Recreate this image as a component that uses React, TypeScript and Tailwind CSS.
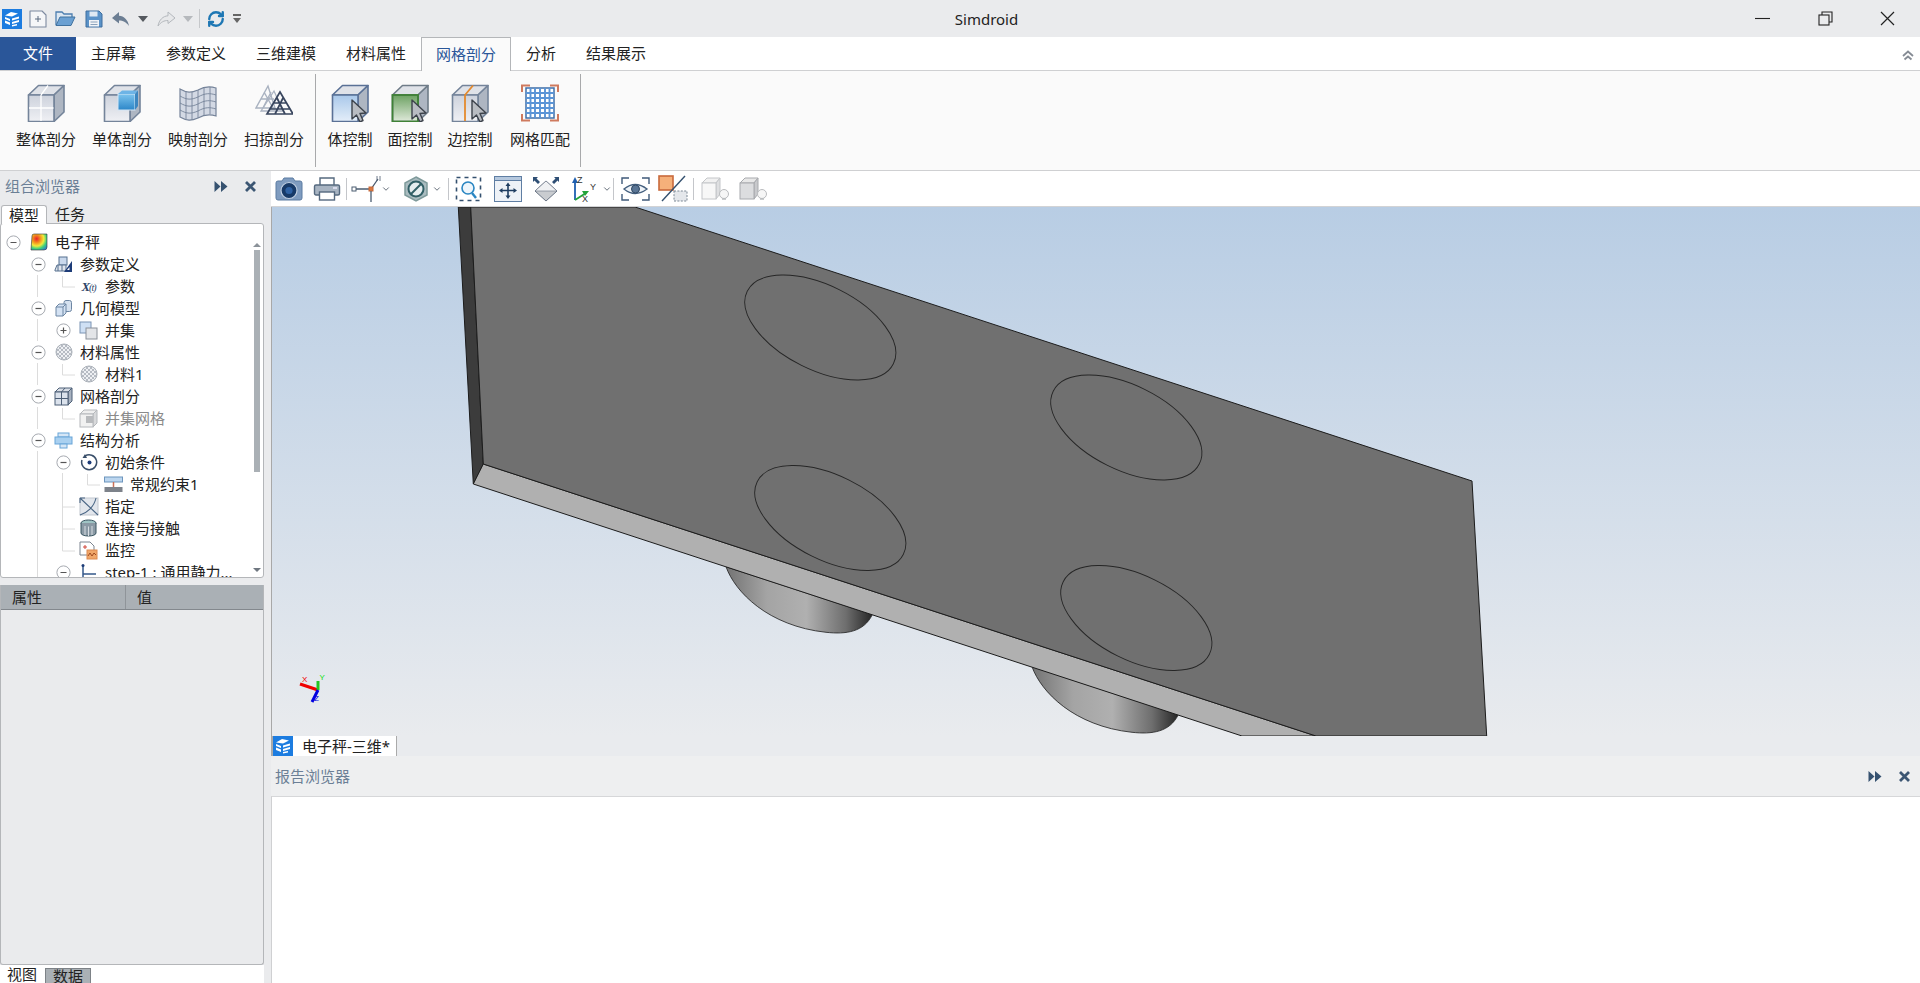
import React from "react";
import { RefreshCw, ChevronDown } from "lucide-react";

const S = ({ w, h, vb, children, className }: { w: number; h: number; vb?: string; children: React.ReactNode; className?: string }) => (
  <svg width={w} height={h} viewBox={vb ?? `0 0 ${w} ${h}`} className={className} fill="none">{children}</svg>
);

const Logo = () => (
  <S w={20} h={20}>
    <rect width="20" height="20" fill="#1c7ce0" />
    <path d="M3 6.5 L9 3 L16 4.5 L10 7.5Z M3 8 L8 10 V12 L3 10Z M3 11.5 L8 13.5 V16 L3 14Z" fill="#fff" />
    <path d="M10 9.5 L17 7.5 V9.5 L10 11.5Z M10 13 L17 11 V13 L10 15Z M10 16 L15 15 V16.5 L10 17.5Z" fill="#fff" />
  </S>
);

const Defs = () => (
  <svg width="0" height="0" className="absolute">
    <defs>
      <linearGradient id="gFront" x1="0" y1="0" x2="0" y2="1"><stop offset="0" stopColor="#cdd2dc" /><stop offset="1" stopColor="#eff0f4" /></linearGradient>
      <linearGradient id="gBlue" x1="0" y1="0" x2="0" y2="1"><stop offset="0" stopColor="#a9c8ea" /><stop offset="1" stopColor="#e4eef9" /></linearGradient>
      <linearGradient id="gGreen" x1="0" y1="0" x2="0" y2="1"><stop offset="0" stopColor="#6da263" /><stop offset="1" stopColor="#dfe9da" /></linearGradient>
      <linearGradient id="gCyan" x1="0" y1="0" x2="0" y2="1"><stop offset="0" stopColor="#7cc4ee" /><stop offset="1" stopColor="#2c86c8" /></linearGradient>
      <radialGradient id="gHeat" cx=".35" cy=".3" r=".9"><stop offset="0" stopColor="#e8202a" /><stop offset=".3" stopColor="#f59b1f" /><stop offset=".5" stopColor="#f2ea3c" /><stop offset=".7" stopColor="#3ed17c" /><stop offset="1" stopColor="#2668e0" /></radialGradient>
      <linearGradient id="gBump" x1="0" y1="0" x2="1" y2="0"><stop offset="0" stopColor="#737373" /><stop offset=".28" stopColor="#a4a4a4" /><stop offset=".55" stopColor="#b0b0b0" /><stop offset=".82" stopColor="#6e6e6e" /><stop offset="1" stopColor="#262626" /></linearGradient>
      <pattern id="pDots" width="4" height="4" patternUnits="userSpaceOnUse"><rect width="4" height="4" fill="#eef0f3" /><rect width="2" height="2" fill="#b6bbc3" /><rect x="2" y="2" width="2" height="2" fill="#b6bbc3" /></pattern>
    </defs>
  </svg>
);

const Cube = ({ front = "url(#gFront)", stroke = "#74849a", split = true, children }: { front?: string; stroke?: string; split?: boolean; children?: React.ReactNode }) => (
  <g strokeLinejoin="round">
    <path d="M1.5 11 L11.5 1.5 H37 L27 11Z" fill="#dfe2e8" stroke={stroke} strokeWidth="1.6" />
    <path d="M27 11 L37 1.5 V28 L27 37.5Z" fill="#aeb6c2" stroke={stroke} strokeWidth="1.6" />
    <rect x="1.5" y="11" width="25.5" height="26.5" fill={front} stroke={stroke} strokeWidth="1.6" />
    {split && <path d="M14 11 V37 M2 24 H26.5 M21 1.5 L14 11" stroke="#fff" strokeWidth="1.3" />}
    {children}
  </g>
);

const Cursor = () => <path d="M21 16 V35 L25.5 31 L29 38 L32 36.5 L29 29.5 L35 29Z" fill="#b8bcc2" stroke="#3d434c" strokeWidth="1.4" strokeLinejoin="round" />;

const RibbonIcons: Record<string, React.ReactNode> = {
  whole: <S w={38} h={38}><Cube /></S>,
  single: <S w={38} h={38}><Cube split={false} /><rect x="15" y="10" width="17" height="16" fill="url(#gCyan)" stroke="#d4e6f5" strokeWidth="1" /><path d="M15 10 L19 6.5 H35 L32 10Z" fill="#6db4e6" /><path d="M32 10 L35 6.5 V22 L32 26Z" fill="#3c86c0" /></S>,
  map: (
    <S w={38} h={38}>
      <path d="M1 5 C8 9 12 9 19 6 C26 2 31 2 37 4 V32 C31 30 26 30 19 34 C12 37 8 37 1 33Z" fill="#d3d9e4" stroke="#76849a" strokeWidth="1.2" />
      <path d="M1 12 C8 16 12 16 19 13 C26 9 31 9 37 11 M1 19 C8 23 12 23 19 20 C26 16 31 16 37 18 M1 26 C8 30 12 30 19 27 C26 23 31 23 37 25" stroke="#76849a" strokeWidth=".9" />
      <path d="M7 7 V35 M13 8 V36 M19 6 V34 M25 3.5 V31.5 M31 3 V30" stroke="#76849a" strokeWidth=".9" />
    </S>
  ),
  sweep: (
    <S w={38} h={38}>
      <path d="M13 2 L1 24 H20Z M6 15 H19 M9 8 L18 24 M16 8 L8 24" stroke="#a9b2c0" strokeWidth="1.4" />
      <path d="M19 7 L6 27 H28Z" stroke="#aab3c1" strokeWidth="1.3" />
      <path d="M25 8 L12 30 H38Z M18.5 19 H31.5 M22 14 L30 30 M28 14 L20 30 M15 25 H35" stroke="#39465e" strokeWidth="1.7" />
    </S>
  ),
  body: <S w={38} h={38}><Cube front="url(#gBlue)" split={false} stroke="#5a7196" /><Cursor /></S>,
  face: <S w={38} h={38}><Cube front="url(#gGreen)" split={false} stroke="#6f7c88" /><rect x="1.5" y="11" width="25.5" height="26.5" stroke="#3f8236" strokeWidth="1.8" /><Cursor /></S>,
  edge: <S w={38} h={38}><Cube split={false} /><path d="M22 1.5 L14 11 V37" stroke="#e48a2e" strokeWidth="1.8" /><Cursor /></S>,
  match: (
    <S w={38} h={38}>
      <path d="M1 8 V1.5 H9 M29 1.5 H37 V8 M37 30 V36.5 H29 M9 36.5 H1 V30" stroke="#cf7a5e" strokeWidth="2" />
      <rect x="5" y="4" width="28" height="30" fill="#fff" stroke="#3f6fa8" strokeWidth="1.5" />
      <path d="M9.5 4 V34 M14 4 V34 M19 4 V34 M24 4 V34 M28.5 4 V34 M5 9 H33 M5 14 H33 M5 19 H33 M5 24 H33 M5 29 H33" stroke="#5a94d6" strokeWidth="1.9" />
    </S>
  ),
};

const RibbonBtn = ({ icon, label, w }: { icon: string; label: string; w: string }) => (
  <div className={`${w} flex flex-col items-center`}>
    <div className="h-[38px] mt-[13px]">{RibbonIcons[icon]}</div>
    <div className="mt-[7px] text-[15px] leading-[20px] text-[#222]">{label}</div>
  </div>
);

const Sep = () => <div className="w-px h-[22px] bg-[#c4c6ca]" />;

const Chev = () => <ChevronDown size={10} strokeWidth={2} className="text-[#4a5563]" />;

const FF = () => (
  <S w={14} h={13}><path d="M0.5 1 L6.5 6.5 L0.5 12Z M7 1 L13.5 6.5 L7 12Z" fill="#365270" /></S>
);
const XX = () => (
  <S w={13} h={13}><path d="M2 2 L11 11 M11 2 L2 11" stroke="#3c5673" strokeWidth="2.8" /></S>
);

const Exp = ({ plus }: { plus?: boolean }) => (
  <S w={15} h={15}>
    <circle cx="7.5" cy="7.5" r="6.6" fill="#fff" stroke="#a6aab0" />
    <path d={plus ? "M4.5 7.5 H10.5 M7.5 4.5 V10.5" : "M4.5 7.5 H10.5"} stroke="#555" strokeWidth="1.2" />
  </S>
);

const TreeIcons: Record<string, React.ReactNode> = {
  root: <S w={20} h={20}><path d="M3 4 Q3 2 5 2 H18 V15 Q18 18 15 18 H2Z" fill="url(#gHeat)" stroke="#333" strokeWidth=".6" /></S>,
  param: <S w={19} h={18}><rect x="5" y="2" width="8" height="8" fill="#c9d8ec" stroke="#56708f" /><path d="M1 15 L3 10 H12 V16 H1Z" fill="#dfe4ec" stroke="#56708f" /><path d="M4 10 V16 M8 10 V16" stroke="#56708f" /><path d="M18 6 V17 H10Z" fill="#1d3c78" /><path d="M15.5 12 V15 H13Z" fill="#fff" /></S>,
  xt: <span className="font-['Liberation_Serif',serif] italic font-bold text-[13px] text-[#2d4468] tracking-[-1px] leading-none">X<span className="text-[10px] font-normal">(t)</span></span>,
  geom: <S w={18} h={18}><rect x="9" y="1.5" width="7.5" height="11" rx="2" fill="#d5e1ef" stroke="#6d86a3" /><path d="M1 8 L4 5 H11 V14 L8 17 H1Z" fill="#d4e2f3" stroke="#6d86a3" /><path d="M1 8 H8 V17 M8 8 L11 5" stroke="#6d86a3" /></S>,
  union: <S w={19} h={19}><rect x="1" y="1" width="11" height="11" fill="#cfe0f4" stroke="#7b94b4" /><rect x="7" y="7" width="11" height="11" fill="#e3e5e8" stroke="#8a9099" /></S>,
  mat: <S w={18} h={18}><circle cx="9" cy="9" r="8" fill="url(#pDots)" stroke="#aab0b8" /></S>,
  mesh: <S w={19} h={19}><path d="M1 5 L5 1 H18 L14 5Z" fill="#d9dee6" stroke="#4d5f76" /><path d="M14 5 L18 1 V14 L14 18Z" fill="#a8b2c0" stroke="#4d5f76" /><rect x="1" y="5" width="13" height="13" fill="#dbe2ec" stroke="#4d5f76" /><path d="M7.5 5 V18 M1 11.5 H14 M11 1 L7.5 5" stroke="#4d5f76" /></S>,
  gmesh: <S w={19} h={19}><path d="M1 5 L5 1 H18 L14 5Z" fill="#efefef" stroke="#b5b8bc" /><path d="M14 5 L18 1 V14 L14 18Z" fill="#d8d9db" stroke="#b5b8bc" /><rect x="1" y="5" width="13" height="13" fill="#f1f1f1" stroke="#b5b8bc" /><rect x="7" y="7" width="7" height="7" fill="#b8babd" /></S>,
  struct: <S w={19} h={17}><rect x="4" y="1" width="11" height="4" fill="#d5e6f6" stroke="#69a5d8" /><rect x="1" y="5" width="17" height="7" fill="#a9d0f0" stroke="#69a5d8" /><rect x="6" y="12" width="7" height="4" fill="#d5e6f6" stroke="#69a5d8" /></S>,
  init: <S w={18} h={18}><path d="M5 3 A7.5 7.5 0 1 1 2 7" stroke="#3a4f6a" strokeWidth="1.5" /><path d="M5 1 L7 5 L2.5 5Z" fill="#3a4f6a" /><circle cx="9.5" cy="9.5" r="2" fill="#1d3c78" /></S>,
  cons: <S w={19} h={17}><rect x="0.5" y="1" width="18" height="5" fill="#bcd6ef" stroke="#6d95bd" /><path d="M9.5 6 V11" stroke="#c8705a" strokeWidth="1.5" /><rect x="0.5" y="11" width="18" height="5" fill="#7d828a" /></S>,
  assign: <S w={20} h={19}><rect x="1" y="1" width="18" height="17" fill="#e2e6ec" stroke="#c2c7cf" /><path d="M1 1 H6 M1 1 V6 M1 18 C8 16 15 10 17 1 M1 1 L19 18" stroke="#496584" strokeWidth="1.1" /></S>,
  conn: <S w={17} h={18}><ellipse cx="8.5" cy="4" rx="7.5" ry="3" fill="#9fc4c4" stroke="#3a5662" /><path d="M1 4 V14 C1 18 16 18 16 14 V4" fill="#8b9aa5" stroke="#3a5662" /><path d="M5 7 V16 M8.5 7.5 V17 M12 7 V16" stroke="#d8dee3" /></S>,
  mon: <S w={19} h={19}><path d="M1 1 H11 L15 5 V14 H1Z" fill="#fff" stroke="#7d8590" /><path d="M4 6 H8 M6 4 V8" stroke="#d1463a" /><rect x="8" y="9" width="10" height="9" fill="#f0a76a" stroke="#dc8a50" /><path d="M9 15 L11 12 L13 15 L15 12 L17 14" stroke="#a04b20" /></S>,
  step: <S w={18} h={19}><path d="M3 2 V18 M3 11 H16" stroke="#35588a" strokeWidth="1.5" /><circle cx="3" cy="2.5" r="1.5" fill="#1d3c78" /></S>,
};

type Row = { d: number; label: string; icon: string; exp?: "-" | "+"; muted?: boolean };
const rows: Row[] = [
  { d: 0, label: "电子秤", icon: "root", exp: "-" },
  { d: 1, label: "参数定义", icon: "param", exp: "-" },
  { d: 2, label: "参数", icon: "xt" },
  { d: 1, label: "几何模型", icon: "geom", exp: "-" },
  { d: 2, label: "并集", icon: "union", exp: "+" },
  { d: 1, label: "材料属性", icon: "mat", exp: "-" },
  { d: 2, label: "材料1", icon: "mat" },
  { d: 1, label: "网格剖分", icon: "mesh", exp: "-" },
  { d: 2, label: "并集网格", icon: "gmesh", muted: true },
  { d: 1, label: "结构分析", icon: "struct", exp: "-" },
  { d: 2, label: "初始条件", icon: "init", exp: "-" },
  { d: 3, label: "常规约束1", icon: "cons" },
  { d: 2, label: "指定", icon: "assign" },
  { d: 2, label: "连接与接触", icon: "conn" },
  { d: 2, label: "监控", icon: "mon" },
  { d: 2, label: "step-1 : 通用静力...", icon: "step", exp: "-" },
];
const indent = ["pl-0", "pl-[25px]", "pl-[50px]", "pl-[75px]"];

const TreeGuides = () => (
  <svg width="262" height="353" viewBox="1 224 262 353" className="absolute left-0 top-0 pointer-events-none" fill="none">
    <path
      d="M37.5 275 V297 M37.5 319 V341 M37.5 363 V385 M37.5 407 V429 M37.5 451 V578
         M62.5 276 V287 H75 M62.5 364 V375 H75 M62.5 408 V419 H75
         M62.5 473 V551 M62.5 507 H75 M62.5 529 H75 M62.5 551 H75
         M87.5 474 V485 H100"
      stroke="#dcdcdc"
    />
  </svg>
);

const Tree = () => (
  <div className="relative h-[355px] ml-0 mr-[7px] bg-white border border-[#b4b6b9] rounded-[3px] overflow-hidden flex">
    <TreeGuides />
    <div className="relative flex-1 pt-[7px] overflow-hidden">
      {rows.map((r) => (
        <div key={r.label} className={`${indent[r.d]} h-[22px] flex items-center whitespace-nowrap`}>
          <div className="w-[25px] flex justify-center">{r.exp && <Exp plus={r.exp === "+"} />}</div>
          <div className="w-[25px] flex justify-center items-center">{TreeIcons[r.icon]}</div>
          <div className={`ml-[4px] text-[15px] leading-[22px] ${r.muted ? "text-[#8a8a8a]" : "text-[#222]"}`}>{r.label}</div>
        </div>
      ))}
    </div>
    <div className="w-[10px] mr-[1px] flex flex-col items-center shrink-0">
      <div className="mt-[19px] w-0 h-0 border-x-[4px] border-x-transparent border-b-[4px] border-b-[#8b9299]" />
      <div className="mt-[3px] w-[6px] h-[222px] bg-[#aab0b5]" />
      <div className="mt-auto mb-[5px] w-0 h-0 border-x-[4px] border-x-transparent border-t-[4px] border-t-[#6f7780]" />
    </div>
  </div>
);

const Viewport = () => {
  const ellipses = [
    [820.3, 327.5],
    [1126.3, 427.5],
    [830.3, 518],
    [1136.3, 618],
  ];
  return (
    <div className="relative h-[529px] border-l border-[#a8a8a8] bg-linear-to-b from-[#b8cde4] to-[#e9ebee] overflow-hidden">
      <svg width="1648" height="529" viewBox="272 207 1648 529" className="absolute inset-0">
        {[0, 306].map((dx, i) => (
          <path
            key={i}
            transform={`translate(${dx} ${i ? 100 : 0})`}
            d="M726 566.7 C735 592 768 626 826 632.3 C846 634.5 864 632 872.3 614.6Z"
            fill="url(#gBump)"
            stroke="#1d1d1d"
            strokeWidth=".8"
          />
        ))}
        <path d="M458.3 207 H470.7 L483.3 464 L473.3 484Z" fill="#3c3c3c" stroke="#1c1c1c" />
        <path d="M483.3 464 L473.3 484 L1242 736 H1316Z" fill="#b0b0b0" stroke="#1c1c1c" />
        <path d="M470.7 207 H635 L1472 481 L1486.7 736 H1316 L483.3 464Z" fill="#707070" stroke="#1c1c1c" />
        {ellipses.map(([cx, cy], i) => (
          <ellipse key={i} cx={cx} cy={cy} rx="81.6" ry="42.3" transform={`rotate(26.4 ${cx} ${cy})`} fill="none" stroke="#262626" strokeWidth=".9" />
        ))}
        <path d="M318 690 L300 684" stroke="#f00000" strokeWidth="3" />
        <path d="M318 690 V681" stroke="#22c522" strokeWidth="3" />
        <path d="M318 690 L312 702" stroke="#0000e0" strokeWidth="3" />
        <text x="302" y="682" fontSize="8" fill="#f00000" fontFamily="Liberation Sans, sans-serif">X</text>
        <text x="319.5" y="680" fontSize="8" fill="#10e010" fontFamily="Liberation Sans, sans-serif">Y</text>
        <text x="314" y="701" fontSize="8" fill="#0000e0" fontFamily="Liberation Sans, sans-serif">Z</text>
      </svg>
    </div>
  );
};

const ToolIcons = () => (
  <div className="h-[36px] bg-white flex items-center border-b border-[#d2d3d5]">
    <div className="ml-[3px] w-[30px]">
      <S w={30} h={26}><path d="M2 7 Q2 5 4 5 H8 L10 2 H19 L21 5 H26 Q28 5 28 7 V22 Q28 24 26 24 H4 Q2 24 2 22Z" fill="#7f9cc0" stroke="#5c7ca2" /><circle cx="15" cy="14.5" r="8" fill="#173a68" stroke="#c2d0e2" strokeWidth="1.2" /><circle cx="15" cy="14.5" r="3.6" fill="#2f62a4" /></S>
    </div>
    <div className="ml-[9px] w-[28px]">
      <S w={28} h={26}><path d="M7 10 V2 H21 V10" fill="#fff" stroke="#55697f" strokeWidth="1.4" /><rect x="1.5" y="9" width="25" height="10" rx="1.5" fill="#a8b4c2" stroke="#55697f" strokeWidth="1.4" /><rect x="6.5" y="16" width="15" height="8" fill="#fff" stroke="#55697f" strokeWidth="1.4" /><path d="M20 12 H24" stroke="#eef" strokeWidth="1.4" /></S>
    </div>
    <div className="ml-[5px] mr-[4px]"><Sep /></div>
    <div className="w-[30px]">
      <S w={30} h={26}><path d="M3 13 H20 L27 3" stroke="#4b5c70" strokeWidth="1.3" /><rect x="1" y="11" width="4" height="4" fill="#fff" stroke="#4b5c70" /><rect x="18" y="11" width="4" height="4" fill="#d97a42" stroke="#c5683a" /><path d="M20 15 V26" stroke="#4b5c70" strokeWidth="1.3" /><path d="M26 0 V5 M29 0 V5" stroke="#4b5c70" strokeWidth=".8" /></S>
    </div>
    <Chev />
    <div className="ml-[12px] w-[26px]">
      <S w={26} h={26}><path d="M13 1 L24 7 V19 L13 25 L2 19 V7Z" fill="#aabcc0" stroke="#7f9a9b" strokeWidth="1.5" /><circle cx="13" cy="13" r="7.5" fill="#e6eef0" stroke="#315f66" strokeWidth="2" /><path d="M8 18 L18 8" stroke="#315f66" strokeWidth="2" /></S>
    </div>
    <div className="ml-[3px]"><Chev /></div>
    <div className="ml-[6px] mr-[6px]"><Sep /></div>
    <div className="w-[27px]">
      <S w={27} h={26}><rect x="1.5" y="1.5" width="24" height="23" stroke="#34506f" strokeWidth="1.6" strokeDasharray="4 4" /><circle cx="13" cy="12" r="6" fill="#eef6fc" stroke="#2a86c2" strokeWidth="1.6" /><path d="M17 17 L21 22" stroke="#2a86c2" strokeWidth="2.4" /></S>
    </div>
    <div className="ml-[12px] w-[28px]">
      <S w={28} h={26}><rect x="0.5" y="0.5" width="27" height="25" fill="#eef2f7" stroke="#5f7ea3" /><rect x="0.5" y="0.5" width="27" height="4" fill="#b5c8de" stroke="#5f7ea3" /><path d="M14 8 V21 M7 14.5 H21" stroke="#1f3d60" strokeWidth="1.6" /><path d="M14 6.5 L11.5 10 H16.5Z M14 23 L11.5 19.5 H16.5Z M5 14.5 L8.5 12 V17Z M23 14.5 L19.5 12 V17Z" fill="#1f3d60" /></S>
    </div>
    <div className="ml-[10px] w-[28px]">
      <S w={28} h={26}><path d="M14 5 L25 15 L14 25 L3 15Z" fill="#c9ccd0" stroke="#697484" /><path d="M14 5 L3 15 H25Z" fill="#f0f1f3" stroke="#697484" strokeWidth=".6" /><path d="M1 1 H6 L4.5 2.5 L8 6 L6 8 L2.5 4.5 L1 6Z M27 1 H22 L23.5 2.5 L20 6 L22 8 L25.5 4.5 L27 6Z" fill="#2f4f75" /></S>
    </div>
    <div className="ml-[11px] w-[31px]">
      <svg width="31" height="27" viewBox="0 0 31 27" fill="none">
        <path d="M4 25 V7" stroke="#1f5fb0" strokeWidth="1.8" /><path d="M4 2 L1 8 H7Z" fill="#1f5fb0" />
        <path d="M4 25 L15 18" stroke="#23a33a" strokeWidth="1.8" /><path d="M18 16 L11 16 L14 21Z" fill="#23a33a" />
        <text x="6" y="8" fontSize="9" fill="#333" fontFamily="Liberation Sans, sans-serif">Z</text>
        <text x="19" y="15" fontSize="9" fill="#333" fontFamily="Liberation Sans, sans-serif">Y</text>
        <text x="11" y="27" fontSize="9" fill="#333" fontFamily="Liberation Sans, sans-serif">X</text>
      </svg>
    </div>
    <Chev />
    <div className="ml-[1px] mr-[7px]"><Sep /></div>
    <div className="w-[29px]">
      <S w={29} h={26}><path d="M1 8 V2 H8 M21 2 H28 V8 M1 18 V24 H8 M21 24 H28 V18" stroke="#3f5a7a" strokeWidth="1.4" /><path d="M3 13 Q14 4 26 13 Q14 22 3 13Z" fill="#eef3f8" stroke="#45607f" strokeWidth="1.4" /><circle cx="14.5" cy="13" r="4" fill="#5a7595" stroke="#2e4763" /></S>
    </div>
    <div className="ml-[8px] w-[30px]">
      <S w={30} h={27}><rect x="1" y="1" width="14" height="14" fill="#f5b07a" stroke="#c96a3c" strokeWidth="1.6" /><path d="M4 26 L27 1" stroke="#33506f" strokeWidth="1.4" /><rect x="16" y="16" width="13" height="10" fill="#e4e7eb" stroke="#7b8794" strokeDasharray="2 1.4" /></S>
    </div>
    <div className="ml-[5px] mr-[7px]"><Sep /></div>
    <div className="w-[30px]">
      <S w={30} h={26}><path d="M1 7 L6 2 H19 L15 7Z" fill="#f1f1f1" stroke="#c4c6c9" /><path d="M15 7 L19 2 V18 L15 23Z" fill="#dedfe1" stroke="#c4c6c9" /><rect x="1" y="7" width="14" height="16" fill="#f7f7f7" stroke="#c4c6c9" /><circle cx="23" cy="18" r="4.5" fill="#f6f6f6" stroke="#b9bbbe" /><path d="M21 23 H25" stroke="#b9bbbe" strokeWidth="1.5" /></S>
    </div>
    <div className="ml-[8px] w-[30px]">
      <S w={30} h={26}><path d="M1 7 L6 2 H19 L15 7Z" fill="#e8e8e8" stroke="#a8aaae" /><path d="M15 7 L19 2 V18 L15 23Z" fill="#c8c9cc" stroke="#a8aaae" /><rect x="1" y="7" width="14" height="16" fill="#dcdddf" stroke="#a8aaae" /><circle cx="23" cy="18" r="4.5" fill="#f6f6f6" stroke="#b9bbbe" /><path d="M21 23 H25" stroke="#b9bbbe" strokeWidth="1.5" /></S>
    </div>
  </div>
);

export default function App() {
  const tabs = ["主屏幕", "参数定义", "三维建模", "材料属性"];
  return (
    <div className="w-[1920px] h-[983px] overflow-hidden flex flex-col bg-white text-[#222] font-['Noto_Sans','Noto_Sans_CJK_SC',sans-serif]">
      <Defs />
      {/* title bar */}
      <div className="h-[37px] bg-[#eaebed] flex items-center shrink-0">
        <div className="w-[245px] flex items-center pl-[2px]">
          <Logo />
          <div className="ml-[7px]">
            <S w={18} h={18}><path d="M1 1 H13 L17 5 V17 H1Z" fill="#f5f6f8" stroke="#7d8aa0" strokeWidth="1.1" strokeLinejoin="round" /><path d="M6 9 H12 M9 6 V12" stroke="#5a6a80" /></S>
          </div>
          <div className="ml-[8px]">
            <S w={21} h={17}><path d="M1 15 V2 H7 L9 4 H17 V7" stroke="#4d7fb0" strokeWidth="1.3" fill="#dce7f2" /><path d="M1 15.5 L5 7 H20 L16 15.5Z" fill="#6ba0d2" stroke="#41729f" /></S>
          </div>
          <div className="ml-[9px]">
            <S w={18} h={18}><path d="M1 1 H14 L17 4 V17 H1Z" fill="#5a92c8" stroke="#3e6f9f" /><rect x="4.5" y="1.5" width="8" height="5" fill="#dfe9f3" /><rect x="4" y="10" width="10" height="6.5" fill="#f2f4f7" /><path d="M5.5 12 H12.5 M5.5 14.5 H12.5" stroke="#8aa2bc" /></S>
          </div>
          <div className="ml-[8px]">
            <S w={19} h={16}><path d="M8 1 L1 7 L8 12.5 V9.5 C12 9.5 15 11 18 15 C17 9 13 5 8 4.8Z" fill="#6c7e93" /></S>
          </div>
          <div className="ml-[8px] w-0 h-0 border-x-[5px] border-x-transparent border-t-[6px] border-t-[#55595f]" />
          <div className="ml-[9px]">
            <S w={19} h={16}><path d="M11 1 L18 7 L11 12.5 V9.5 C7 9.5 4 11 1 15 C2 9 6 5 11 4.8Z" fill="#e7e8ea" stroke="#b4b8bd" /></S>
          </div>
          <div className="ml-[7px] w-0 h-0 border-x-[5px] border-x-transparent border-t-[6px] border-t-[#b6b9bd]" />
          <div className="ml-[6px] w-px h-[19px] bg-[#c6c8cb]" />
          <RefreshCw size={18} strokeWidth={3.2} className="ml-[7px] text-[#1e77b4]" />
          <div className="ml-[8px] flex flex-col items-center">
            <div className="w-[8px] h-[2px] bg-[#666] mb-[2px]" />
            <div className="w-0 h-0 border-x-[4px] border-x-transparent border-t-[5px] border-t-[#666]" />
          </div>
        </div>
        <div className="flex-1 text-center text-[15px] text-[#222] pt-[1px] pr-[2px]">Simdroid</div>
        <div className="w-[190px] flex items-center">
          <div className="ml-[25px]"><S w={15} h={15}><path d="M0 7.5 H15" stroke="#222" strokeWidth="1.1" /></S></div>
          <div className="ml-[48px]"><S w={15} h={15}><rect x="1" y="4" width="10" height="10" stroke="#222" strokeWidth="1.1" /><path d="M4 4 V1 H14 V11 H11" stroke="#222" strokeWidth="1.1" /></S></div>
          <div className="ml-[47px]"><S w={15} h={15}><path d="M1 1 L14 14 M14 1 L1 14" stroke="#222" strokeWidth="1.2" /></S></div>
        </div>
      </div>
      {/* tabs */}
      <div className="h-[33px] bg-white flex items-stretch shrink-0 text-[15px] relative whitespace-nowrap">
        <div className="w-[76px] bg-[#2a5699] text-white flex items-center justify-center">文件</div>
        {tabs.map((t) => (
          <div key={t} className="px-[15px] flex items-center">{t}</div>
        ))}
        <div className="flex items-center bg-[#fafafa] text-[#2a5699] border-x border-t border-[#b4b6b9] -mb-px z-10 w-[90px] justify-center">网格剖分</div>
        <div className="px-[15px] flex items-center">分析</div>
        <div className="px-[15px] flex items-center">结果展示</div>
        <div className="ml-auto mr-[6px] self-center mt-[3px]">
          <S w={12} h={11}><path d="M1 6 L6 1.5 L11 6 M2.5 9.5 L6 6.5 L9.5 9.5" stroke="#868c95" strokeWidth="1.8" /></S>
        </div>
      </div>
      {/* ribbon */}
      <div className="h-[101px] bg-[#fafafa] border-y border-[#cfd0d2] flex shrink-0">
        <div className="pl-[8px] pr-[3px] w-[315px] flex">
          <RibbonBtn icon="whole" label="整体剖分" w="w-[76px]" />
          <RibbonBtn icon="single" label="单体剖分" w="w-[76px]" />
          <RibbonBtn icon="map" label="映射剖分" w="w-[76px]" />
          <RibbonBtn icon="sweep" label="扫掠剖分" w="w-[76px]" />
        </div>
        <div className="w-px my-[3px] bg-[#a8a9ab]" />
        <div className="pl-[4px] w-[264px] flex">
          <RibbonBtn icon="body" label="体控制" w="w-[60px]" />
          <RibbonBtn icon="face" label="面控制" w="w-[60px]" />
          <RibbonBtn icon="edge" label="边控制" w="w-[60px]" />
          <RibbonBtn icon="match" label="网格匹配" w="w-[80px]" />
        </div>
        <div className="w-px my-[3px] bg-[#a8a9ab]" />
      </div>
      {/* body */}
      <div className="flex-1 flex min-h-0">
        <div className="w-[271px] bg-[#eaebed] flex flex-col shrink-0">
          <div className="h-[34px] flex items-center pl-[5px] pb-[4px]">
            <span className="text-[15px] text-[#6b7f96]">组合浏览器</span>
            <div className="ml-[134px]"><FF /></div>
            <div className="ml-[16px]"><XX /></div>
          </div>
          <div className="h-[18px] flex items-stretch text-[15px] relative z-10">
            <div className="ml-[1px] w-[46px] h-[19px] bg-white border-x border-t border-[#b4b6b9] rounded-t-[3px] flex items-center justify-center leading-none">模型</div>
            <div className="ml-[8px] flex items-center leading-none">任务</div>
          </div>
          <Tree />
          <div className="h-[7px]" />
          <div className="h-[380px] mr-[7px] border border-t-0 border-[#b4b6b9] rounded-b-[3px] flex flex-col">
            <div className="h-[25px] bg-[#aab0b5] border-b border-[#83888d] flex items-center text-[15px]">
              <div className="w-[125px] h-full border-r border-[#8f9499] pl-[11px] flex items-center">属性</div>
              <div className="pl-[11px]">值</div>
            </div>
          </div>
          <div className="flex-1 min-h-0 mr-[7px] bg-white flex text-[15px] leading-none">
            <div className="pl-[7px] w-[45px] pt-[1px] flex items-center">视图</div>
            <div className="w-[46px] mt-[3px] pt-[1px] bg-[#aab0b5] border-x border-t border-[#7d8287] flex items-center justify-center">数据</div>
          </div>
        </div>
        <div className="flex-1 min-w-0 flex flex-col">
          <ToolIcons />
          <Viewport />
          <div className="h-[20px] bg-[#e9ebee] flex border-l border-[#a8a8a8]">
            <div className="w-[125px] bg-white border-x border-[#aaa] flex items-center text-[15px] leading-none">
              <div className="bg-[#1c7ce0]"><Logo /></div>
              <span className="ml-[9px] whitespace-nowrap">电子秤-三维*</span>
            </div>
          </div>
          <div className="h-[40px] bg-[#eeeff0] flex items-center pl-[4px] pr-[9px]">
            <span className="text-[15px] text-[#6b7f96]">报告浏览器</span>
            <div className="ml-auto"><FF /></div>
            <div className="ml-[16px]"><XX /></div>
          </div>
          <div className="flex-1 min-h-0 bg-white border-t border-[#d6d7d9] border-l border-l-[#cfd0d2]" />
        </div>
      </div>
    </div>
  );
}
